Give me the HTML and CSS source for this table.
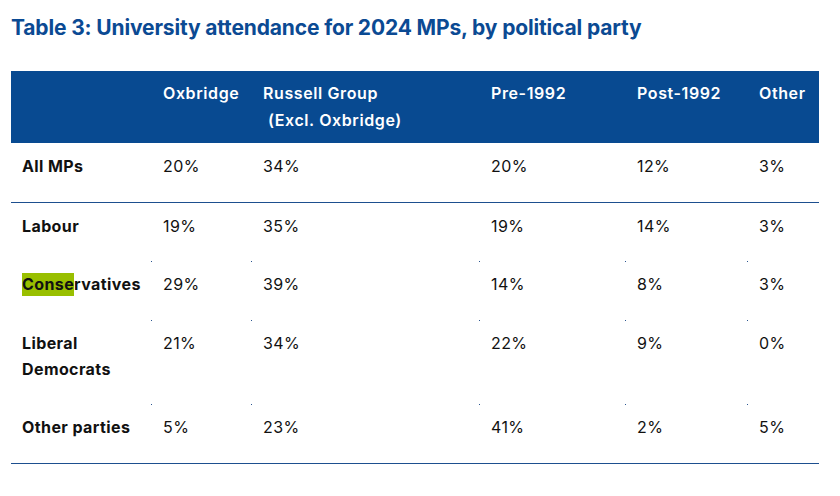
FILE: index.html
```html
<!DOCTYPE html>
<html lang="en">
<head>
<meta charset="utf-8">
<title>Table 3</title>
<link rel="stylesheet" href="styles.css">
</head>
<body>
<div class="page">
  <h1 class="title">Table 3: University attendance for 2024 MPs, by political party</h1>
  <table class="data">
    <colgroup>
      <col class="c0"><col class="c1"><col class="c2"><col class="c3"><col class="c4"><col class="c5">
    </colgroup>
    <thead>
      <tr>
        <th class="lab"></th>
        <th>Oxbridge</th>
        <th>Russell Group<br><span class="sub">(Excl. Oxbridge)</span></th>
        <th>Pre-1992</th>
        <th>Post-1992</th>
        <th>Other</th>
      </tr>
    </thead>
    <tbody>
      <tr class="sep">
        <td class="lab">All MPs</td><td>20%</td><td>34%</td><td>20%</td><td>12%</td><td>3%</td>
      </tr>
      <tr>
        <td class="lab">Labour</td><td>19%</td><td>35%</td><td>19%</td><td>14%</td><td>3%</td>
      </tr>
      <tr class="dots">
        <td class="lab"><span class="hl">Conse</span>rvatives</td><td>29%</td><td>39%</td><td>14%</td><td>8%</td><td>3%</td>
      </tr>
      <tr class="dots">
        <td class="lab">Liberal<br>Democrats</td><td>21%</td><td>34%</td><td>22%</td><td>9%</td><td>0%</td>
      </tr>
      <tr class="dots last">
        <td class="lab">Other parties</td><td>5%</td><td>23%</td><td>41%</td><td>2%</td><td>5%</td>
      </tr>
    </tbody>
  </table>
</div>
</body>
</html>
```

FILE: styles.css
```css
html, body {
  margin: 0;
  padding: 0;
  background: #ffffff;
}

.page {
  padding: 14px 0 0 11px;
  font-family: Inter, "Liberation Sans", sans-serif;
}

.title {
  margin: 0 0 29px 0;
  font-size: 21px;
  line-height: 28px;
  font-weight: 700;
  color: #0b4a93;
  letter-spacing: -0.15px;
}

.data {
  border-collapse: collapse;
  table-layout: fixed;
  width: 808px;
}

.c0 { width: 140px; }
.c1 { width: 100px; }
.c2 { width: 228px; }
.c3 { width: 146px; }
.c4 { width: 122px; }
.c5 { width: 72px; }

.data th {
  background: #084a91;
  color: #ffffff;
  font-size: 16px;
  font-weight: 600;
  line-height: 27px;
  letter-spacing: 0.6px;
  text-align: left;
  vertical-align: top;
  padding: 9px 0 9px 12px;
  height: 54px;
}

.data th .sub {
  padding-left: 5px;
}

.data td {
  font-size: 16px;
  line-height: 26px;
  letter-spacing: 0.4px;
  color: #111111;
  text-align: left;
  vertical-align: top;
  padding: 10px 0 22.6px 12px;
  position: relative;
}

.data td.lab,
.data th.lab {
  padding-left: 11px;
  font-weight: 700;
}

.data tr.sep td {
  border-bottom: 1.5px solid #1d4f8f;
}

.data tr.last td {
  border-bottom: 1.5px solid #1d4f8f;
}

.data tr.dots td:not(.lab)::before {
  content: "";
  position: absolute;
  left: 0;
  top: 0;
  width: 1px;
  height: 1px;
  background: #2a5590;
}

.hl {
  background: #99bf00;
  padding: 1px 0 2px 0;
}
```
